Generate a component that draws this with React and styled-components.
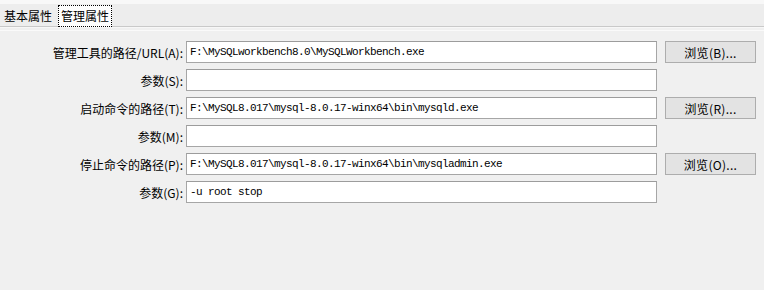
import React from 'react';
import styled, { createGlobalStyle } from 'styled-components';

const Global = createGlobalStyle`
  html, body {
    margin: 0;
    padding: 0;
    background: #f0f0f0;
  }
  body {
    font-family: "Noto Sans CJK SC", "Liberation Sans", sans-serif;
    font-size: 12px;
    color: #000;
  }
`;

const Page = styled.div`
  width: 764px;
  height: 290px;
  background: #f0f0f0;
  overflow: hidden;
`;

const TopEdge = styled.div`
  height: 4px;
  background: #f8f8f8;
`;

const TabBar = styled.div`
  display: flex;
  align-items: flex-end;
  height: 22px;
  background: #ededed;
  border-bottom: 1px solid #c9c9c9;
  padding-left: 1px;
  gap: 3px;
`;

const Tab = styled.div`
  line-height: 19px;
  padding: 0 2px;
  box-sizing: border-box;
  white-space: nowrap;
  background: ${p => (p.$active ? '#fdfdfd' : 'transparent')};
  border: 1px dotted ${p => (p.$active ? '#000' : 'transparent')};
  margin-bottom: ${p => (p.$active ? '-1px' : '1px')};
  height: ${p => (p.$active ? '22px' : '20px')};
`;

const Shine = styled.div`
  height: 2px;
  border-top: 1px solid #f7f7f7;
  border-bottom: 1px solid #fafafa;
`;

const Form = styled.div`
  display: flex;
  flex-direction: column;
  gap: 6px;
  padding-top: 10px;
`;

const Row = styled.div`
  display: flex;
  align-items: center;
  height: 22px;
`;

const Label = styled.div`
  width: 183px;
  margin-right: 3px;
  text-align: right;
  white-space: nowrap;
  font-size: 12px;
  color: #000;
`;

const Field = styled.input`
  width: 471px;
  height: 22px;
  box-sizing: border-box;
  border: 1px solid #a6a6a6;
  border-top-color: #9c9c9c;
  background: #fff;
  padding: 0 3px;
  font-family: "Liberation Mono", "Noto Sans CJK SC", monospace;
  font-size: 11px;
  letter-spacing: -0.6px;
  color: #000;
  outline: none;
`;

const Browse = styled.button`
  width: 91px;
  height: 22px;
  margin-left: 8px;
  box-sizing: border-box;
  border: 1px solid #adadad;
  background: #e3e3e3;
  font-family: "Noto Sans CJK SC", "Liberation Sans", sans-serif;
  font-size: 12px;
  color: #000;
  padding: 0;
  letter-spacing: 0.3px;
`;

const rows = [
  { label: '管理工具的路径/URL(A):', value: 'F:\\MySQLworkbench8.0\\MySQLWorkbench.exe', btn: '浏览(B)...' },
  { label: '参数(S):', value: '' },
  { label: '启动命令的路径(T):', value: 'F:\\MySQL8.017\\mysql-8.0.17-winx64\\bin\\mysqld.exe', btn: '浏览(R)...' },
  { label: '参数(M):', value: '' },
  { label: '停止命令的路径(P):', value: 'F:\\MySQL8.017\\mysql-8.0.17-winx64\\bin\\mysqladmin.exe', btn: '浏览(O)...' },
  { label: '参数(G):', value: '-u root stop' },
];

const App = () => {
  return (
    <Page>
      <Global />
      <TopEdge />
      <TabBar>
        <Tab>基本属性</Tab>
        <Tab $active>管理属性</Tab>
      </TabBar>
      <Shine />
      <Form>
        {rows.map(r => (
          <Row key={r.label}>
            <Label>{r.label}</Label>
            <Field defaultValue={r.value} />
            {r.btn && <Browse>{r.btn}</Browse>}
          </Row>
        ))}
      </Form>
    </Page>
  );
};

export default App;
